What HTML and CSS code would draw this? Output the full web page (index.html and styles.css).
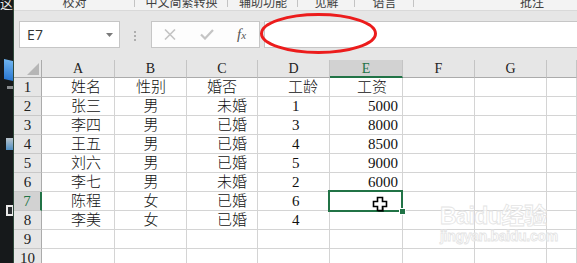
FILE: index.html
```html
<!DOCTYPE html>
<html lang="zh">
<head>
<meta charset="utf-8">
<title>Sheet</title>
<link rel="stylesheet" href="styles.css">
</head>
<body>
<div class="screen">
  <aside class="desk">
    <span class="desk-char">这</span>
    <span class="desk-icon blue"></span>
    <span class="desk-icon grey"></span>
    <span class="desk-icon small"></span>
    <span class="desk-icon box"></span>
  </aside>
  <main class="app">
    <div class="ribbon">
      <div class="tab t1"><span>校对</span></div>
      <div class="tab t2"><span>中文简繁转换</span></div>
      <div class="tab t3"><span>辅助功能</span></div>
      <div class="tab t4"><span>见解</span></div>
      <div class="tab t5"><span>语言</span></div>
      <div class="tab t6"><span>批注</span></div>
    </div>
    <div class="fbar">
      <div class="namebox">
        <span class="ref">E7</span>
        <svg class="drop" width="7" height="4" viewBox="0 0 7 4"><path d="M0 0H7L3.5 4Z" fill="#7a7a7a"/></svg>
      </div>
      <div class="grip"><i></i><i></i><i></i></div>
      <div class="fbtns">
        <svg class="btn-x" width="12" height="11" viewBox="0 0 12 11"><path d="M1 0.5L11 10.5M11 0.5L1 10.5" stroke="#c4c4c4" stroke-width="1.6" fill="none"/></svg>
        <svg class="btn-ok" width="14" height="11" viewBox="0 0 14 11"><path d="M1 5.5L5 9.5L13 1" stroke="#c4c4c4" stroke-width="2.2" fill="none"/></svg>
        <span class="fx">f<small>x</small></span>
      </div>
      <div class="finput"></div>
    </div>
    <div class="sheet">
      <div class="hd corner"><span class="tri"></span></div>
      <div class="hd col">A</div>
      <div class="hd col">B</div>
      <div class="hd col">C</div>
      <div class="hd col">D</div>
      <div class="hd col sel">E</div>
      <div class="hd col">F</div>
      <div class="hd col">G</div>
      <div class="hd col"></div>

      <div class="hd row">1</div>
      <div class="c ca">姓名</div><div class="c cb">性别</div><div class="c cc ctr">婚否</div><div class="c cd hdr">工龄</div><div class="c ce hdr">工资</div><div class="c"></div><div class="c"></div><div class="c"></div>

      <div class="hd row">2</div>
      <div class="c ca">张三</div><div class="c cb">男</div><div class="c cc">未婚</div><div class="c cd num">1</div><div class="c ce num">5000</div><div class="c"></div><div class="c"></div><div class="c"></div>

      <div class="hd row">3</div>
      <div class="c ca">李四</div><div class="c cb">男</div><div class="c cc">已婚</div><div class="c cd num">3</div><div class="c ce num">8000</div><div class="c"></div><div class="c"></div><div class="c"></div>

      <div class="hd row">4</div>
      <div class="c ca">王五</div><div class="c cb">男</div><div class="c cc">已婚</div><div class="c cd num">4</div><div class="c ce num">8500</div><div class="c"></div><div class="c"></div><div class="c"></div>

      <div class="hd row">5</div>
      <div class="c ca">刘六</div><div class="c cb">男</div><div class="c cc">已婚</div><div class="c cd num">5</div><div class="c ce num">9000</div><div class="c"></div><div class="c"></div><div class="c"></div>

      <div class="hd row">6</div>
      <div class="c ca">李七</div><div class="c cb">男</div><div class="c cc">未婚</div><div class="c cd num">2</div><div class="c ce num">6000</div><div class="c"></div><div class="c"></div><div class="c"></div>

      <div class="hd row sel">7</div>
      <div class="c ca">陈程</div><div class="c cb">女</div><div class="c cc">已婚</div><div class="c cd num">6</div><div class="c ce active"><span class="handle"></span></div><div class="c"></div><div class="c"></div><div class="c"></div>

      <div class="hd row">8</div>
      <div class="c ca">李美</div><div class="c cb">女</div><div class="c cc">已婚</div><div class="c cd num">4</div><div class="c ce"></div><div class="c"></div><div class="c"></div><div class="c"></div>

      <div class="hd row">9</div>
      <div class="c"></div><div class="c"></div><div class="c"></div><div class="c"></div><div class="c"></div><div class="c"></div><div class="c"></div><div class="c"></div>

      <div class="hd row">10</div>
      <div class="c"></div><div class="c"></div><div class="c"></div><div class="c"></div><div class="c"></div><div class="c"></div><div class="c"></div><div class="c"></div>
    </div>
  </main>

  <svg class="cursor" width="18" height="16" viewBox="0 0 18 16">
    <path d="M6.5 1.5H11.5V5.5H15.5V10.5H11.5V14.5H6.5V10.5H2.5V5.5H6.5Z" fill="#fff" stroke="#000" stroke-width="1.6"/>
    <path d="M12.3 11.3V15.3H7.3" stroke="#000" stroke-width="1.2" fill="none" opacity="0.5"/>
  </svg>

  <div class="watermark">
    <div class="wm-big">Bai<span class="paw">du</span>经验</div>
    <div class="wm-small">jingyan.baidu.com</div>
  </div>

  <svg class="mark" width="124" height="46" viewBox="0 0 124 46">
    <ellipse cx="61.5" cy="22.5" rx="57" ry="19" fill="none" stroke="#ec1c1c" stroke-width="3"/>
  </svg>
</div>
</body>
</html>
```

FILE: styles.css
```css
* { box-sizing: border-box; }
html, body { margin: 0; padding: 0; }
body {
  width: 577px;
  height: 263px;
  overflow: hidden;
  background: #e6e6e6;
  font-family: "Noto Sans CJK SC", sans-serif;
}
.screen {
  position: relative;
  display: flex;
  width: 577px;
  height: 263px;
  overflow: hidden;
}

/* desktop strip */
.desk {
  position: relative;
  flex: 0 0 14px;
  height: 263px;
  background: #16191b;
  border-right: 1px solid #2f4a3b;
  overflow: hidden;
}
.desk-char {
  position: absolute;
  left: 0;
  top: -5px;
  font-size: 13px;
  line-height: 16px;
  color: #e8e8e8;
}
.desk-icon { position: absolute; display: block; }
.desk-icon.blue {
  left: 4px; top: 60px; width: 9px; height: 20px;
  background: linear-gradient(#6fb4f0, #2a78d2);
  transform: skewY(12deg);
}
.desk-icon.grey {
  left: 7px; top: 86px; width: 6px; height: 3px;
  background: #8a8d90;
}
.desk-icon.small {
  left: 6px; top: 138px; width: 7px; height: 12px;
  background: linear-gradient(#b9c4cc, #4f8fc4);
}
.desk-icon.box {
  left: 6px; top: 205px; width: 8px; height: 11px;
  border: 2px solid #e9e9e9;
  background: #2a2d30;
}

/* app */
.app {
  position: relative;
  flex: 1 1 auto;
  display: flex;
  flex-direction: column;
  min-width: 0;
  overflow: hidden;
}
.ribbon {
  display: flex;
  height: 11px;
  background: #f3f3f3;
  border-bottom: 1px solid #d9d9d9;
  overflow: hidden;
  flex: 0 0 11px;
}
.tab {
  position: relative;
  flex: 0 0 auto;
  height: 10px;
  text-align: center;
  font-size: 12px;
  color: #404040;
}
.tab span {
  display: block;
  line-height: 12px;
  margin-top: -4px;
}
.tab::after {
  content: "";
  position: absolute;
  right: 0;
  top: 0;
  width: 1px;
  height: 7px;
  background: #c3c3c3;
}
.t1 { width: 121px; }
.t2 { width: 93px; }
.t3 { width: 70px; }
.t4 { width: 57px; }
.t5 { width: 59px; }
.t6 { width: 236px; }
.t6::after { display: none; }

.fbar {
  display: flex;
  align-items: flex-start;
  height: 49px;
  flex: 0 0 49px;
  padding-top: 10px;
  background: #e6e6e6;
}
.namebox {
  position: relative;
  display: flex;
  align-items: center;
  width: 101px;
  height: 27px;
  margin-left: 5px;
  padding-left: 7px;
  background: #fff;
  border: 1px solid #c6c6c6;
}
.ref {
  font-family: "Open Sans", sans-serif;
  font-size: 14px;
  color: #333;
  letter-spacing: 0.2px;
}
.drop { margin-left: auto; margin-right: 6px; }
.grip {
  display: flex;
  flex-direction: column;
  gap: 2px;
  width: 2px;
  margin: 10px 15px 0 14px;
}
.grip i {
  display: block;
  width: 2px;
  height: 2px;
  background: #aeaeae;
}
.fbtns {
  display: flex;
  align-items: center;
  width: 109px;
  height: 27px;
  padding-left: 12px;
  background: #fdfdfd;
  border: 1px solid #c6c6c6;
}
.btn-ok { margin-left: 24px; }
.fx {
  margin-left: 23px;
  font-family: "Liberation Serif", serif;
  font-style: italic;
  font-size: 15px;
  color: #555;
  line-height: 1;
}
.fx small { font-size: 11px; }
.finput {
  flex: 1 1 auto;
  height: 27px;
  margin-left: 4px;
  background: #fff;
  border: 1px solid #c6c6c6;
  border-right: 0;
}

/* sheet */
.sheet {
  display: grid;
  grid-template-columns: 28px 73px 72px 71px 72px 73px 72px 72px 1fr;
  grid-template-rows: 18px;
  grid-auto-rows: 19px;
  background: #fff;
  font-family: "Liberation Serif", "Noto Sans CJK SC", serif;
  font-size: 15px;
  font-weight: 300;
  color: #111;
}
.hd {
  background: #e6e6e6;
  color: #222;
  font-family: "Liberation Serif", serif;
  font-weight: 400;
  text-align: center;
}
.hd.col {
  font-size: 14px;
  line-height: 18px;
  border-right: 1px solid #c4c4c4;
  border-bottom: 1px solid #ababab;
}
.hd.col.sel {
  background: #d2d2d2;
  color: #217346;
  border-bottom: 2px solid #217346;
}
.hd.corner {
  position: relative;
  border-right: 1px solid #ababab;
  border-bottom: 1px solid #ababab;
}
.tri {
  position: absolute;
  right: 2px;
  bottom: 2px;
  width: 0;
  height: 0;
  border-left: 12px solid transparent;
  border-bottom: 12px solid #b6b6b6;
}
.hd.row {
  font-size: 15px;
  line-height: 19px;
  border-right: 1px solid #ababab;
  border-bottom: 1px solid #c8c8c8;
}
.hd.row.sel {
  background: #d2d2d2;
  color: #217346;
  border-right: 2px solid #217346;
}
.c {
  position: relative;
  border-right: 1px solid #d4d4d4;
  border-bottom: 1px solid #d4d4d4;
  line-height: 19px;
  white-space: nowrap;
  overflow: visible;
}
.ca { padding-left: 29px; }
.cb { text-align: center; padding-left: 1px; }
.cc { text-align: right; padding-right: 10px; }
.cc.ctr { text-align: center; padding-right: 0; }
.cd.hdr { padding-left: 30px; }
.cd.num { padding-left: 34px; }
.ce.hdr { padding-left: 27px; }
.ce.num { text-align: right; padding-right: 4px; }

.active::before {
  content: "";
  position: absolute;
  left: -2px;
  top: -2px;
  right: -1px;
  bottom: -2px;
  border: 2px solid #217346;
  z-index: 2;
}
.handle {
  position: absolute;
  right: -4px;
  bottom: -5px;
  width: 7px;
  height: 7px;
  background: #217346;
  border: 1px solid #fff;
  z-index: 3;
}

/* overlays */
.cursor {
  position: absolute;
  left: 371px;
  top: 196px;
  z-index: 5;
}
.mark {
  position: absolute;
  left: 257px;
  top: 11px;
  z-index: 6;
}
.watermark {
  position: absolute;
  left: 440px;
  top: 205px;
  z-index: 4;
  font-family: "Liberation Sans", "Noto Sans CJK SC", sans-serif;
  color: rgba(255,255,255,0.7);
  -webkit-text-stroke: 0.8px #e4e4e4;
  line-height: 1;
}
.wm-big { font-size: 23px; font-weight: bold; letter-spacing: -0.5px; }
.wm-small { font-size: 14px; font-weight: bold; margin-top: 1px; letter-spacing: -0.3px; }
```
